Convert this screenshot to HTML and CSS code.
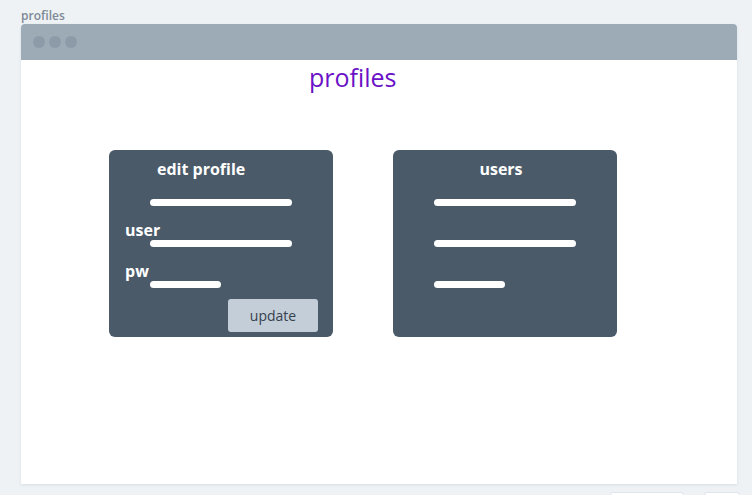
FILE: index.html
```html
<!DOCTYPE html>
<html>
<head>
<meta charset="utf-8">
<link rel="stylesheet" href="styles.css">
</head>
<body>
<div class="page">
  <div class="label">profiles</div>
  <div class="window">
    <div class="titlebar">
      <span class="dot"></span><span class="dot"></span><span class="dot"></span>
    </div>
    <div class="content">
      <h1 class="heading">profiles</h1>
      <div class="cards">
        <div class="card">
          <div class="card-title title-left">edit profile</div>
          <div class="bar bar-long first"></div>
          <div class="field-label">user</div>
          <div class="bar bar-long"></div>
          <div class="field-label">pw</div>
          <div class="bar bar-short"></div>
          <div class="actions"><button class="btn">update</button></div>
        </div>
        <div class="card">
          <div class="card-title title-center">users</div>
          <div class="bar bar-long first"></div>
          <div class="bar bar-long spaced"></div>
          <div class="bar bar-short spaced"></div>
        </div>
      </div>
    </div>
  </div>
  <div class="footer">
    <div class="fbtn fbtn-a"></div>
    <div class="fbtn fbtn-b"></div>
  </div>
</div>
</body>
</html>
```

FILE: styles.css
```css
html, body {
  margin: 0;
  padding: 0;
  background: #eef2f5;
  overflow: hidden;
}
body {
  width: 752px;
  height: 495px;
  font-family: "Open Sans", "Noto Sans", sans-serif;
}
.page {
  padding: 7px 0 0 21px;
}
.label {
  font-size: 12px;
  font-weight: 600;
  color: #7d8996;
  line-height: 17px;
  height: 17px;
}
.window {
  width: 716px;
  height: 460px;
  background: #ffffff;
  border-radius: 4px 4px 0 0;
  box-shadow: 0 1px 3px rgba(60, 80, 100, 0.12);
  display: flex;
  flex-direction: column;
}
.titlebar {
  height: 36px;
  background: #9dabb7;
  border-radius: 4px 4px 0 0;
  display: flex;
  align-items: center;
  padding-left: 12px;
  gap: 4px;
}
.dot {
  width: 12px;
  height: 12px;
  border-radius: 50%;
  background: #8d9ba8;
}
.content {
  display: flex;
  flex-direction: column;
}
.heading {
  margin: 0;
  padding: 0 0 0 288px;
  font-size: 25px;
  font-weight: 400;
  color: #6b11c6;
  line-height: 34px;
  height: 34px;
}
.cards {
  display: flex;
  gap: 60px;
  padding: 56px 0 0 88px;
}
.card {
  width: 224px;
  height: 187px;
  background: #4a5a69;
  border-radius: 6px;
  box-sizing: border-box;
  padding-top: 8px;
  display: flex;
  flex-direction: column;
  color: #ffffff;
}
.card-title {
  font-size: 16px;
  font-weight: 700;
  line-height: 22px;
  height: 22px;
}
.title-left {
  padding-left: 48px;
}
.title-center {
  text-align: center;
  padding-right: 8px;
}
.bar {
  height: 7px;
  border-radius: 4px;
  background: #ffffff;
  margin-left: 41px;
}
.bar-long { width: 142px; }
.bar-short { width: 71px; }
.bar.first { margin-top: 19px; }
.bar.spaced { margin-top: 34px; }
.field-label {
  font-size: 16px;
  font-weight: 700;
  line-height: 18px;
  height: 18px;
  padding-left: 16px;
  margin-top: 15px;
  margin-bottom: 1px;
}
.actions {
  display: flex;
  justify-content: flex-end;
  padding-right: 15px;
  margin-top: 11px;
}
.btn {
  width: 90px;
  height: 33px;
  border: none;
  border-radius: 3px;
  background: #c3ced8;
  color: #36414c;
  font-family: "Open Sans", "Noto Sans", sans-serif;
  font-size: 14px;
  padding: 0;
}
.footer {
  display: flex;
  padding-left: 589px;
  gap: 20px;
  margin-top: 8px;
}
.fbtn {
  height: 10px;
  background: #ffffff;
  border: 1px solid #dfe5ea;
  border-radius: 3px;
}
.fbtn-a { width: 72px; }
.fbtn-b { width: 34px; }
```
